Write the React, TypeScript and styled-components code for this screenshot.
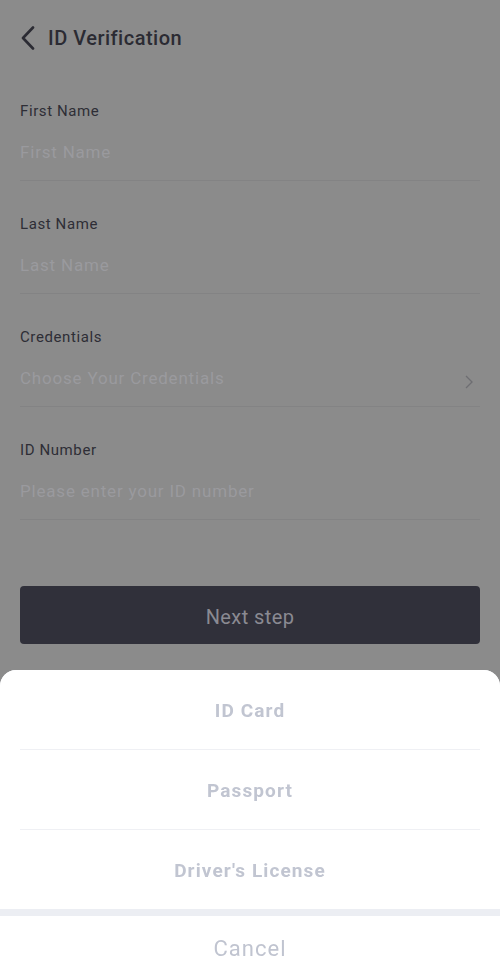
import styled, { createGlobalStyle } from "styled-components"

const GlobalStyle = createGlobalStyle`
	html, body {
		margin: 0;
		padding: 0;
		background: #8b8b8b;
		font-family: Roboto, "Liberation Sans", sans-serif;
	}
	* {
		box-sizing: border-box;
	}
`

const Page = styled.div`
	min-height: 980px;
	background: #8b8b8b;
	padding: 0 20px;
`

const Header = styled.div`
	height: 68px;
	display: flex;
	align-items: center;
	gap: 11px;
	padding-top: 8px;
	h1 {
		margin: 0;
		font-size: 20px;
		font-weight: 500;
		color: #2b2b33;
		letter-spacing: 0.5px;
	}
`

const Field = styled.div`
	padding: 33px 0 16px;
	border-bottom: 1px solid #838384;
	display: flex;
	flex-direction: column;
	gap: 19px;
`

const Label = styled.div`
	font-size: 15px;
	line-height: 20px;
	color: #2e2e36;
	letter-spacing: 0.6px;
`

const InputRow = styled.div`
	display: flex;
	align-items: center;
	justify-content: space-between;
	height: 24px;
`

const Placeholder = styled.span`
	font-size: 17px;
	color: #9a9a9e;
	letter-spacing: 0.8px;
`

const NextButton = styled.button`
	margin-top: 66px;
	width: 100%;
	height: 58px;
	border: none;
	border-radius: 4px;
	background: #30303a;
	color: #8a8a92;
	font-family: inherit;
	font-size: 20px;
	letter-spacing: 0.4px;
	padding-top: 4px;
`

const Sheet = styled.div`
	position: fixed;
	left: 0;
	right: 0;
	bottom: 0;
	height: 310px;
	background: #eceef3;
	border-radius: 16px 16px 0 0;
	overflow: hidden;
	display: flex;
	flex-direction: column;
	gap: 7px;
`

const Options = styled.div`
	background: #fff;
	padding: 0 20px;
`

const Option = styled.div<{ $last?: boolean }>`
	height: ${p => (p.$last ? "79px" : "80px")};
	display: flex;
	align-items: center;
	justify-content: center;
	padding-top: 2px;
	border-bottom: ${p => (p.$last ? "none" : "1px solid #eff0f4")};
	font-size: 19px;
	font-weight: 700;
	color: #c1c5d1;
	letter-spacing: 1.1px;
`

const Cancel = styled.div`
	flex: 1;
	background: #fff;
	display: flex;
	align-items: center;
	justify-content: center;
	font-size: 22px;
	color: #c0c4d0;
	letter-spacing: 1px;
`

const fields = [
	{ label: "First Name", placeholder: "First Name" },
	{ label: "Last Name", placeholder: "Last Name" },
	{ label: "Credentials", placeholder: "Choose Your Credentials", arrow: true },
	{ label: "ID Number", placeholder: "Please enter your ID number" }
]

const options = ["ID Card", "Passport", "Driver's License"]

export default function App() {
	return (
		<>
			<GlobalStyle />
			<Page>
				<Header>
					<svg width='17' height='24' viewBox='0 0 17 24'>
						<path d='M13 1.5 L3 12 L13 22.5' fill='none' stroke='#2b2b33' strokeWidth='2.6' strokeLinecap='round' strokeLinejoin='round' />
					</svg>
					<h1>ID Verification</h1>
				</Header>
				{fields.map(f => (
					<Field key={f.label}>
						<Label>{f.label}</Label>
						<InputRow>
							<Placeholder>{f.placeholder}</Placeholder>
							{f.arrow && (
								<svg width='10' height='16' viewBox='0 0 10 16' style={{ marginRight: 6, marginTop: 8 }}>
									<path d='M2 2 L8 8 L2 14' fill='none' stroke='#6e6e72' strokeWidth='1.3' />
								</svg>
							)}
						</InputRow>
					</Field>
				))}
				<NextButton>Next step</NextButton>
			</Page>
			<Sheet>
				<Options>
					{options.map((o, i) => (
						<Option key={o} $last={i === options.length - 1}>
							{o}
						</Option>
					))}
				</Options>
				<Cancel>Cancel</Cancel>
			</Sheet>
		</>
	)
}
